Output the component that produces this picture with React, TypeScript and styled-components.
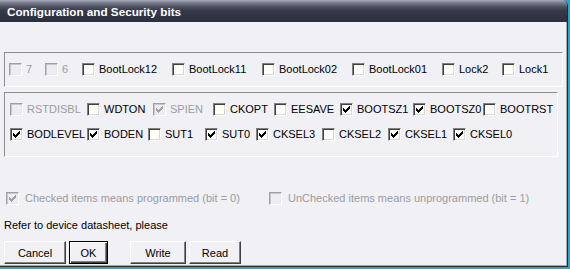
import styled, { createGlobalStyle } from "styled-components";

const GlobalStyle = createGlobalStyle`
  html, body {
    margin: 0;
    padding: 0;
    background: #22a9c9;
  }
  body {
    font-family: "Liberation Sans", Arial, sans-serif;
    font-size: 11px;
  }
`;

type Bit = { label: string; w?: number; checked?: boolean; disabled?: boolean };

const lockBits: Bit[] = [
  { label: "7", w: 36, disabled: true },
  { label: "6", w: 37, disabled: true },
  { label: "BootLock12", w: 90 },
  { label: "BootLock11", w: 90 },
  { label: "BootLock02", w: 90 },
  { label: "BootLock01", w: 90 },
  { label: "Lock2", w: 60 },
  { label: "Lock1" },
];

const highFuses: Bit[] = [
  { label: "RSTDISBL", w: 77, disabled: true },
  { label: "WDTON", w: 66 },
  { label: "SPIEN", w: 60, disabled: true, checked: true },
  { label: "CKOPT", w: 61 },
  { label: "EESAVE", w: 66 },
  { label: "BOOTSZ1", w: 73, checked: true },
  { label: "BOOTSZ0", w: 70, checked: true },
  { label: "BOOTRST" },
];

const lowFuses: Bit[] = [
  { label: "BODLEVEL", w: 77, checked: true },
  { label: "BODEN", w: 61, checked: true },
  { label: "SUT1", w: 57 },
  { label: "SUT0", w: 51, checked: true },
  { label: "CKSEL3", w: 66, checked: true },
  { label: "CKSEL2", w: 66 },
  { label: "CKSEL1", w: 65, checked: true },
  { label: "CKSEL0", checked: true },
];

const Window = styled.div`
  width: 568px;
  height: 267px;
  box-sizing: border-box;
  background: #f0f0f5;
  border-right: 1px solid #2a2a2a;
  border-bottom: 1px solid #2a2a2a;
  border-top-right-radius: 6px;
  box-shadow: inset -1px -1px #a8a8b0;
  overflow: hidden;
  display: flex;
  flex-direction: column;
`;

const TitleBar = styled.div`
  height: 22px;
  flex-shrink: 0;
  display: flex;
  align-items: center;
  padding-left: 7px;
  background: linear-gradient(
    to bottom,
    #a6aab9 0px,
    #767a8c 3px,
    #4c4f60 7px,
    #353849 11px,
    #2c2f3e 22px
  );
  color: #fff;
  font-weight: bold;
  font-size: 11.7px;
`;

const Content = styled.div`
  padding: 30px 0 0 4px;
  display: flex;
  flex-direction: column;
`;

const Group = styled.div<{ $w: number; $gap?: number; $pl: number; $pb: number }>`
  width: ${(p) => p.$w}px;
  box-sizing: border-box;
  border-style: solid;
  border-width: 1px;
  border-color: #8c8c90 #ffffff #ffffff #8c8c90;
  padding: 10px 0 ${(p) => p.$pb}px ${(p) => p.$pl}px;
  display: flex;
  flex-direction: column;
  gap: ${(p) => p.$gap ?? 0}px;
  & + & {
    margin-top: 5px;
  }
`;

const Row = styled.div`
  display: flex;
  align-items: center;
  height: 13px;
`;

const Item = styled.label<{ $w?: number; $gap: number; $disabled?: boolean }>`
  display: flex;
  align-items: center;
  gap: ${(p) => p.$gap}px;
  width: ${(p) => (p.$w ? `${p.$w}px` : "auto")};
  flex-shrink: 0;
  height: 13px;
  line-height: 13px;
  white-space: nowrap;
  color: ${(p) => (p.$disabled ? "#9c9ca0" : "#000")};
`;

const Box = styled.span<{ $disabled?: boolean }>`
  width: 13px;
  height: 13px;
  box-sizing: border-box;
  flex-shrink: 0;
  display: flex;
  align-items: center;
  justify-content: center;
  border: 1px solid;
  border-color: ${(p) =>
    p.$disabled ? "#a0a0a4 #ffffff #ffffff #a0a0a4" : "#808080 #ffffff #ffffff #808080"};
  box-shadow: ${(p) =>
    p.$disabled
      ? "inset 1px 1px #c8c8cc, inset -1px -1px #e8e8ec"
      : "inset 1px 1px #404040, inset -1px -1px #d8d8dc"};
  background: ${(p) => (p.$disabled ? "#eeeef2" : "#fffffa")};
`;

const Check = ({ color }: { color: string }) => (
  <svg width="7" height="7" viewBox="0 0 7 7" shapeRendering="crispEdges">
    {[2, 3, 4, 3, 2, 1, 0].map((y, x) => (
      <rect key={x} x={x} y={y} width="1" height="3" fill={color} />
    ))}
  </svg>
);

const CheckItem = ({ bit, gap = 4 }: { bit: Bit; gap?: number }) => (
  <Item $w={bit.w} $gap={gap} $disabled={bit.disabled}>
    <Box $disabled={bit.disabled}>
      {bit.checked && <Check color={bit.disabled ? "#a0a0a4" : "#000"} />}
    </Box>
    {bit.label}
  </Item>
);

const Legend = styled.div`
  display: flex;
  align-items: center;
  height: 13px;
  margin-top: 35px;
  padding-left: 2px;
`;

const Note = styled.div`
  margin-top: 14px;
  height: 13px;
  line-height: 13px;
  padding-left: 0;
  color: #000;
`;

const Buttons = styled.div`
  display: flex;
  margin-top: 9px;
`;

const Button = styled.button<{ $w: number; $default?: boolean; $ml?: number }>`
  width: ${(p) => p.$w}px;
  height: 23px;
  margin-left: ${(p) => p.$ml ?? 0}px;
  padding: 0;
  box-sizing: border-box;
  font-family: "Liberation Sans", Arial, sans-serif;
  font-size: 11px;
  color: #000;
  background: #f0f0f5;
  border: 1px solid;
  border-color: ${(p) => (p.$default ? "#000" : "#ffffff #404040 #404040 #ffffff")};
  box-shadow: ${(p) =>
    p.$default
      ? "inset 1px 1px #ffffff, inset -1px -1px #404040, inset -2px -2px #808080"
      : "inset -1px -1px #808080"};
`;

export default function App() {
  return (
    <>
      <GlobalStyle />
      <Window>
        <TitleBar>Configuration and Security bits</TitleBar>
        <Content>
          <Group $w={559} $pl={4} $pb={10}>
            <Row>
              {lockBits.map((b) => (
                <CheckItem key={b.label} bit={b} />
              ))}
            </Row>
          </Group>
          <Group $w={554} $pl={5} $pb={15} $gap={12}>
            <Row>
              {highFuses.map((b) => (
                <CheckItem key={b.label} bit={b} />
              ))}
            </Row>
            <Row>
              {lowFuses.map((b) => (
                <CheckItem key={b.label} bit={b} />
              ))}
            </Row>
          </Group>
          <Legend>
            <CheckItem
              gap={6}
              bit={{ label: "Checked items means programmed (bit = 0)", w: 263, checked: true, disabled: true }}
            />
            <CheckItem
              gap={6}
              bit={{ label: "UnChecked items means unprogrammed (bit = 1)", disabled: true }}
            />
          </Legend>
          <Note>Refer to device datasheet, please</Note>
          <Buttons>
            <Button $w={62}>Cancel</Button>
            <Button $w={39} $ml={3} $default>
              OK
            </Button>
            <Button $w={56} $ml={22}>
              Write
            </Button>
            <Button $w={52} $ml={3}>
              Read
            </Button>
          </Buttons>
        </Content>
      </Window>
    </>
  );
}
